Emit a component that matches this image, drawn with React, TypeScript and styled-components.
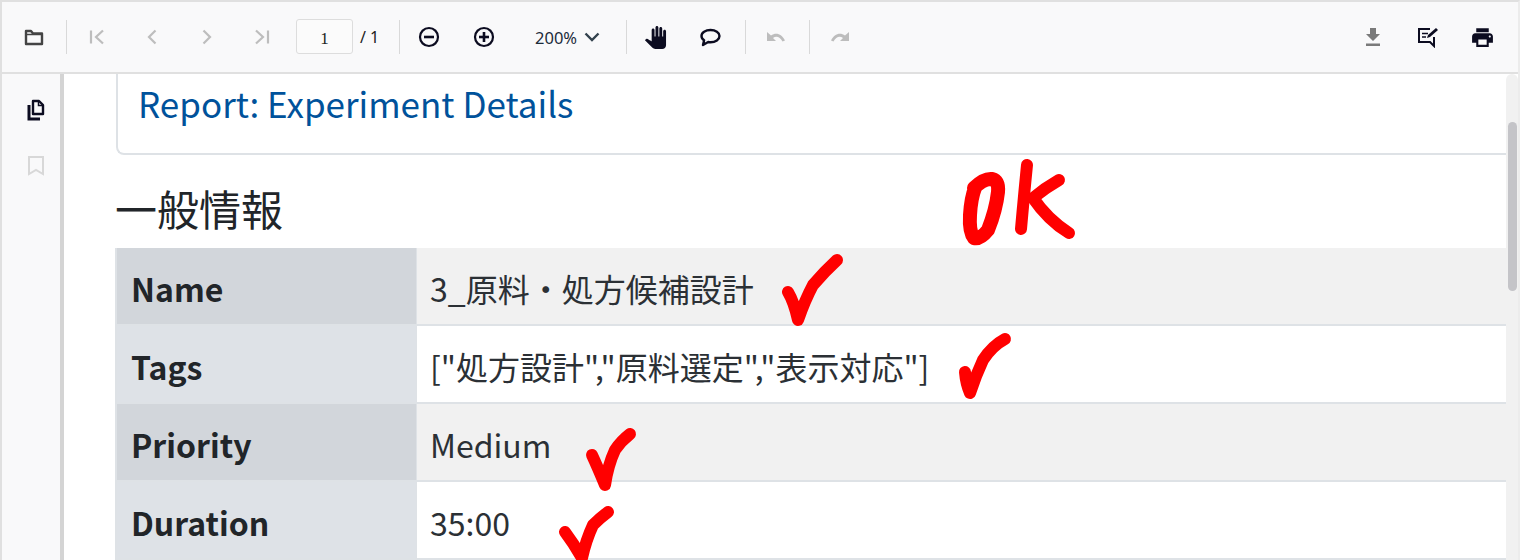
import React from 'react';
import styled, { createGlobalStyle } from 'styled-components';
import { MdPanTool, MdPrint } from 'react-icons/md';

const GlobalStyle = createGlobalStyle`
    html, body {
        margin: 0;
        padding: 0;
        background: #ffffff;
        overflow: hidden;
    }
`;

const Viewer = styled.div`
    position: relative;
    width: 1520px;
    height: 560px;
    box-sizing: border-box;
    border-top: 2px solid #e0e0e0;
    border-left: 2px solid #e0e0e0;
    border-right: 2px solid #ececec;
    display: flex;
    flex-direction: column;
    overflow: hidden;
    font-family: "Noto Sans CJK JP", "Noto Sans", sans-serif;
`;

const Toolbar = styled.div`
    height: 72px;
    flex: none;
    box-sizing: border-box;
    padding: 0 8px 0 4px;
    display: flex;
    align-items: center;
    background: #f9f9fa;
    border-bottom: 2px solid #e0e0e0;
`;

const IconButton = styled.div<{ $dim?: boolean }>`
    width: 55px;
    height: 34px;
    flex: none;
    display: flex;
    align-items: center;
    justify-content: center;
    color: ${(p) => (p.$dim ? '#bdbdbd' : '#0c0c20')};
`;

const Separator = styled.div<{ $left?: number; $right?: number }>`
    width: 1px;
    height: 34px;
    flex: none;
    background: #d9d9d9;
    margin-left: ${(p) => p.$left ?? 5}px;
    margin-right: ${(p) => p.$right ?? 2}px;
`;

const PageInput = styled.div`
    width: 57px;
    height: 35px;
    flex: none;
    box-sizing: border-box;
    margin: 0 0 2px 7px;
    padding-top: 7px;
    background: #fbfbfb;
    border: 1px solid #dddddd;
    border-radius: 3px;
    font-family: "Liberation Serif", "Noto Serif", serif;
    font-size: 17px;
    line-height: 24px;
    text-align: center;
    color: #222222;
`;

const PageCount = styled.div`
    width: 46px;
    flex: none;
    padding-left: 7px;
    box-sizing: border-box;
    font-family: "Noto Sans", sans-serif;
    font-size: 16px;
    color: #222222;
`;

const ZoomSelect = styled.div`
    width: 115px;
    flex: none;
    display: flex;
    align-items: center;
    gap: 7px;
    padding-left: 24px;
    box-sizing: border-box;
    font-family: "Noto Sans", sans-serif;
    font-size: 16.500px;
    color: #1c2c3a;
`;

const Spacer = styled.div`
    flex: 1;
`;

const Body = styled.div`
    flex: 1;
    min-height: 0;
    display: flex;
`;

const Sidebar = styled.div`
    width: 62px;
    flex: none;
    box-sizing: border-box;
    padding: 24px 0 0 10px;
    display: flex;
    flex-direction: column;
    align-items: center;
    gap: 31px;
    background: #f9f9fa;
    border-right: 4px solid #d4d4d4;
`;

const SideIcon = styled.div<{ $dim?: boolean }>`
    height: 24px;
    display: flex;
    align-items: center;
    color: ${(p) => (p.$dim ? '#d8d8d8' : '#0c0c20')};
`;

const PageArea = styled.div`
    flex: 1;
    min-width: 0;
    overflow: hidden;
    padding-left: 52px;
    background: #ffffff;
`;

const TitleCard = styled.div`
    height: 81px;
    box-sizing: border-box;
    padding-left: 20px;
    border: 2px solid #dee2e6;
    border-top: none;
    border-right: none;
    border-radius: 0 0 0 8px;
    font-size: 35px;
    line-height: 58px;
    color: #00529b;
    white-space: nowrap;
`;

const Heading = styled.div`
    margin: 23px 0 0 -1px;
    height: 70px;
    font-size: 42px;
    line-height: 60px;
    color: #212529;
`;

const InfoRow = styled.div`
    display: flex;
    height: 78px;
    margin-left: -1px;
    box-sizing: border-box;
    border-bottom: 2px solid #dee2e6;
    &:first-of-type {
        height: 80px;
        border-top: 2px solid #dee2e6;
    }
`;

const InfoLabel = styled.div<{ $odd: boolean }>`
    width: 302px;
    flex: none;
    box-sizing: border-box;
    padding: 3px 0 0 14px;
    display: flex;
    align-items: center;
    border-left: 2px solid #dee2e6;
    border-right: 1px solid #dee2e6;
    font-size: 32px;
    font-weight: 700;
    color: #212529;
    background: ${(p) => (p.$odd ? '#d2d6db' : '#dee2e7')};
`;

const InfoValue = styled.div<{ $odd: boolean }>`
    flex: 1;
    box-sizing: border-box;
    padding: 3px 0 0 13px;
    display: flex;
    align-items: center;
    font-size: 32px;
    color: #2b3035;
    white-space: nowrap;
    background: ${(p) => (p.$odd ? '#f1f1f1' : '#ffffff')};
`;

const ScrollTrack = styled.div`
    width: 12px;
    flex: none;
    background: #f1f1f1;
    border-radius: 6px 6px 0 0;
`;

const ScrollThumb = styled.div`
    width: 9px;
    height: 169px;
    margin: 48px 0 0 2px;
    background: #c4c4c8;
    border-radius: 5px;
`;

const InkLayer = styled.svg`
    position: absolute;
    top: -2px;
    left: -2px;
    pointer-events: none;
`;

const rows = [
    { label: 'Name', value: '3_原料・処方候補設計' },
    { label: 'Tags', value: '["処方設計","原料選定","表示対応"]' },
    { label: 'Priority', value: 'Medium' },
    { label: 'Duration', value: '35:00' },
];

const inkStrokes = [
    { width: 14, d: 'M974 188 Q984 178 992 179 Q999 181 998 192 Q996 210 988 230 Q980 240 974 238 Q969 232 970 215 Q971 198 975 188' },
    { width: 12, d: 'M1027 165 Q1024 195 1021 229' },
    { width: 12, d: 'M1059 180 Q1045 188 1033 198 Q1048 220 1069 233' },
    { width: 12, d: 'M788 292 Q794 302 798 320 Q805 300 813 285 Q824 272 837 260' },
    { width: 12, d: 'M965 372 Q966 384 970 393 Q976 375 983 360 Q992 346 1005 339' },
    { width: 12, d: 'M592 455 Q598 468 605 485 Q608 465 615 450 Q621 441 630 434' },
    { width: 12, d: 'M565 532 Q574 544 582 558 Q586 540 593 525 Q600 518 608 512' },
];

const Folder = () => (
    <svg width="20" height="18" viewBox="0 0 20 18" fill="none" stroke="#444444" strokeWidth="2.400">
        <path d="M2 16V3h5l2 2.500h9V16z" strokeLinejoin="round" />
        <path d="M2 6.500h16" strokeWidth="1.500" />
    </svg>
);

const PagerIcon = ({ d }: { d: string }) => (
    <svg width="18" height="18" viewBox="0 0 18 18" fill="none" stroke="currentColor" strokeWidth="2.200">
        <path d={d} />
    </svg>
);

const ZoomIcon = ({ plus }: { plus?: boolean }) => (
    <svg width="22" height="22" viewBox="0 0 22 22" fill="none" stroke="currentColor" strokeWidth="2.200">
        <circle cx="11" cy="11" r="9" />
        <path d="M6 11h10" strokeWidth="2.600" />
        {plus && <path d="M11 6v10" strokeWidth="2.600" />}
    </svg>
);

const Chevron = () => (
    <svg width="16" height="10" viewBox="0 0 16 10" fill="none" stroke="#33424d" strokeWidth="2.400">
        <path d="M1.500 1.500 8 8l6.500-6.500" />
    </svg>
);

const Comment = () => (
    <svg width="21" height="19" viewBox="0 0 21 19" fill="none" stroke="currentColor" strokeWidth="2.400">
        <path d="M10.500 2C5.500 2 1.500 4.500 1.500 8c0 1.800 1 3.300 2.600 4.300L3 17l5.200-3c.7.100 1.500.200 2.300.200 5 0 9-2.700 9-6.200S15.500 2 10.500 2z" strokeLinejoin="round" />
    </svg>
);

const Undo = ({ flip }: { flip?: boolean }) => (
    <svg width="20" height="12" viewBox="0 0 20 12" fill="currentColor" style={flip ? { transform: 'scaleX(-1)' } : undefined}>
        <path d="M1 1v9h9L7 7c3-2.500 7-1.500 9.500 3.500L19 9.500C16 3 10 .800 5 4.500z" />
    </svg>
);

const Download = () => (
    <svg width="16" height="20" viewBox="0 0 16 20" fill="#7a7a7a">
        <path d="M5 1h6v6h4l-7 7-7-7h4zM1 16.500h14V19H1z" />
    </svg>
);

const AnnotateEdit = () => (
    <svg width="22" height="21" viewBox="0 0 22 21" fill="none" stroke="currentColor" strokeWidth="2">
        <path d="M13 2H2v13h11l4 4v-9" />
        <path d="M5 6.500h6M5 10h4" strokeWidth="1.500" />
        <path d="M10 11l1-3 8-7 2 2-8 7z" fill="currentColor" stroke="none" />
    </svg>
);

const Pages = () => (
    <svg width="20" height="22" viewBox="0 0 20 22" fill="none" stroke="currentColor" strokeWidth="2.400">
        <path d="M7 15V2h6l4 4v9z" strokeLinejoin="round" />
        <path d="M12.500 2v4.500H17" strokeWidth="1.500" />
        <path d="M3 6v14h11" strokeWidth="3" />
    </svg>
);

const Bookmark = () => (
    <svg width="18" height="21" viewBox="0 0 18 21" fill="none" stroke="currentColor" strokeWidth="2">
        <path d="M2 2h14v17l-7-4-7 4z" />
    </svg>
);

const App: React.FC = () => {
    return (
        <Viewer>
            <GlobalStyle />
            <Toolbar>
                <IconButton><Folder /></IconButton>
                <Separator />
                <IconButton $dim><PagerIcon d="M3 2.500v13M15 2.500 8 9l7 6.500" /></IconButton>
                <IconButton $dim><PagerIcon d="M12.500 2.500 6 9l6.500 6.500" /></IconButton>
                <IconButton $dim><PagerIcon d="M5.500 2.500 12 9l-6.500 6.500" /></IconButton>
                <IconButton $dim><PagerIcon d="M15 2.500v13M3 2.500 10 9l-7 6.500" /></IconButton>
                <PageInput>1</PageInput>
                <PageCount>/ 1</PageCount>
                <Separator $left={0} $right={1} />
                <IconButton><ZoomIcon /></IconButton>
                <IconButton><ZoomIcon plus /></IconButton>
                <ZoomSelect>200% <Chevron /></ZoomSelect>
                <Separator $left={0} $right={1} />
                <IconButton><MdPanTool size={23} /></IconButton>
                <IconButton><Comment /></IconButton>
                <Separator $left={7} $right={2} />
                <IconButton $dim><Undo /></IconButton>
                <Separator $left={6} $right={2} />
                <IconButton $dim><Undo flip /></IconButton>
                <Spacer />
                <IconButton><Download /></IconButton>
                <IconButton><AnnotateEdit /></IconButton>
                <IconButton><MdPrint size={25} /></IconButton>
            </Toolbar>
            <Body>
                <Sidebar>
                    <SideIcon><Pages /></SideIcon>
                    <SideIcon $dim><Bookmark /></SideIcon>
                </Sidebar>
                <PageArea>
                    <TitleCard>Report: Experiment Details</TitleCard>
                    <Heading>一般情報</Heading>
                    {rows.map((row, i) => (
                        <InfoRow key={row.label}>
                            <InfoLabel $odd={i % 2 === 0}>{row.label}</InfoLabel>
                            <InfoValue $odd={i % 2 === 0}>{row.value}</InfoValue>
                        </InfoRow>
                    ))}
                </PageArea>
                <ScrollTrack><ScrollThumb /></ScrollTrack>
            </Body>
            <InkLayer width="1520" height="560" viewBox="0 0 1520 560" fill="none" stroke="#ff0000" strokeLinecap="round" strokeLinejoin="round">
                {inkStrokes.map((s) => <path key={s.d} d={s.d} strokeWidth={s.width} />)}
            </InkLayer>
        </Viewer>
    );
};

export default App;
